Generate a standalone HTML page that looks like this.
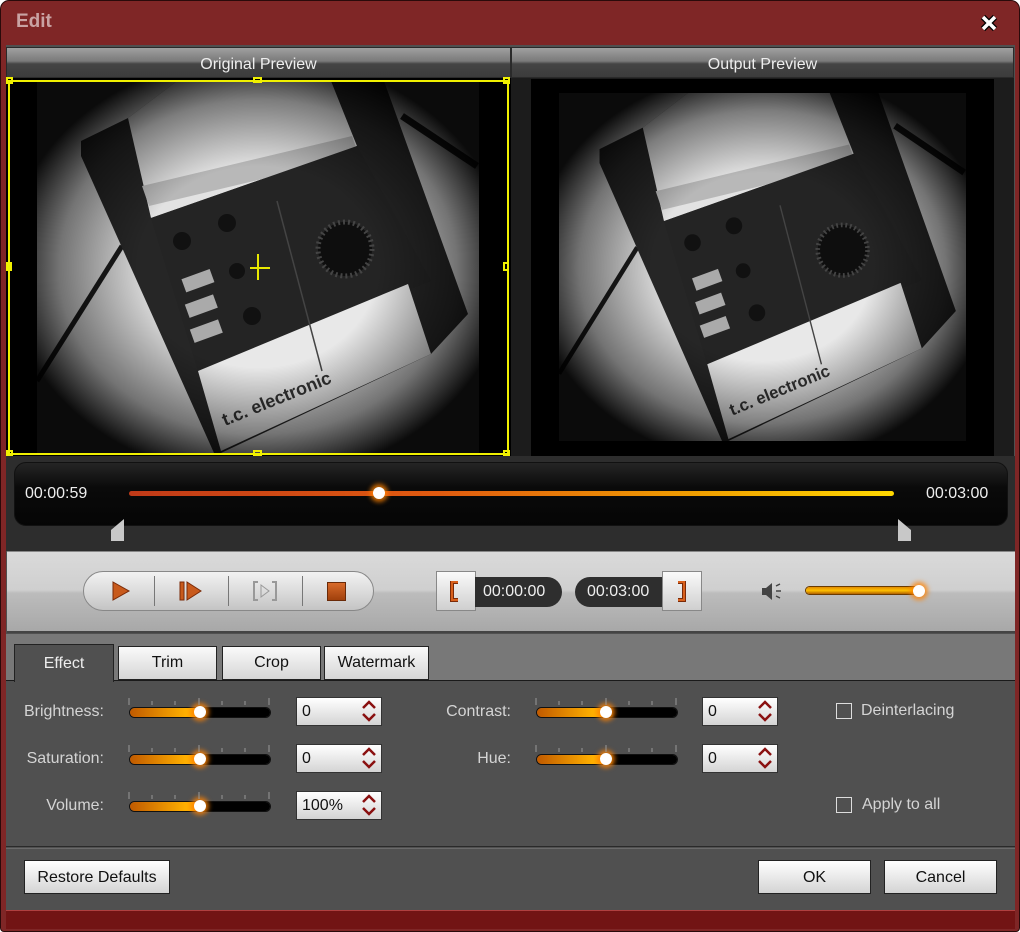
<!DOCTYPE html>
<html><head><meta charset="utf-8"><style>
*{margin:0;padding:0;box-sizing:border-box}
body{width:1020px;height:932px;overflow:hidden;background:#fff;font-family:"Liberation Sans",sans-serif;font-size:15px}
.win{position:absolute;left:0;top:0;width:1020px;height:932px;background:#7f2626;border:1px solid #2a0a0a;border-radius:9px 9px 4px 4px;overflow:hidden}
.a{position:absolute}
.title{left:15px;top:10px;color:#c9a3a3;font-weight:bold;font-size:19px}
.ph{top:46px;height:31px;background:linear-gradient(#a0a0a0,#7a7a7a 45%,#444 55%,#3c3c3c);color:#eee;text-align:center;line-height:33px;font-size:16px;border:1px solid #2a2a2a}
.time{color:#eee;font-size:15px}
.tab{top:645px;height:34px;background:linear-gradient(#fafafa,#d6d6d6);border:1px solid #222;color:#111;text-align:center;line-height:32px;font-size:16px}
.lbl{color:#d4d4d4;font-size:16px;text-align:right;width:110px}
.trk{height:9px;border-radius:5px;background:linear-gradient(90deg,#c05a00,#ffb000 40%,#ffa000 48%,#000 55%,#000);box-shadow:0 0 0 1px #111}
.knob{width:12px;height:12px;border-radius:50%;background:#fff;box-shadow:0 0 5px 3px rgba(255,130,0,.8)}
.spin{width:86px;height:29px;background:linear-gradient(#fff,#d4d4d4);border:1px solid #333;color:#111;padding:5px 0 0 5px;font-size:16px}
.btn{top:859px;height:34px;background:linear-gradient(#fff,#d4d4d4);border:1px solid #222;color:#111;text-align:center;line-height:33px;font-size:16px}
.cb{width:16px;height:16px;border:1px solid #ddd}
.cbl{color:#d4d4d4;font-size:16px}
</style></head><body>
<svg width="0" height="0" style="position:absolute"><defs>
<radialGradient id="vg" cx="50%" cy="50%" r="60%"><stop offset="0.45" stop-color="#000" stop-opacity="0"/><stop offset="0.75" stop-color="#000" stop-opacity="0.45"/><stop offset="0.95" stop-color="#000" stop-opacity="0.95"/></radialGradient>
<g id="photo">
<rect width="442" height="372" fill="#d2d2d2"/>
<path d="M0 300 L85 165" stroke="#1a1a1a" stroke-width="5"/>
<path d="M365 35 L440 85" stroke="#1a1a1a" stroke-width="7"/>
<polygon points="44,60 91,37 140,0 347,0 431,233 394,273 184,372 177,372 44,75" fill="#262626"/>
<polygon points="91,37 140,0 294,0 320,65 114,137" fill="#e2e2e2"/>
<polygon points="105,105 315,55 322,75 112,125" fill="#b8b8b8"/>
<polygon points="114,137 320,65 394,200 161,290" fill="#242424"/>
<polygon points="161,290 371,203 394,273 184,370" fill="#e8e8e8"/>
<circle cx="308" cy="168" r="27" fill="#0e0e0e" stroke="#444" stroke-dasharray="2 3" stroke-width="5"/>
<circle cx="145" cy="160" r="9" fill="#111"/><circle cx="190" cy="142" r="9" fill="#111"/><circle cx="215" cy="235" r="9" fill="#111"/><circle cx="200" cy="190" r="8" fill="#111"/>
<rect x="146" y="193" width="30" height="14" fill="#aaa" transform="rotate(-20 160 200)"/>
<rect x="150" y="218" width="30" height="14" fill="#aaa" transform="rotate(-20 165 227)"/>
<rect x="155" y="243" width="30" height="14" fill="#aaa" transform="rotate(-20 170 252)"/>
<path d="M240 120 L285 290" stroke="#444" stroke-width="1.5"/>
<text x="188" y="345" font-family="Liberation Sans" font-weight="bold" font-size="18" fill="#333" transform="rotate(-22 188 345)">t.c. electronic</text>
<rect width="442" height="372" fill="url(#vg)"/>
</g></defs></svg>
<div class="win">
<div class="a title">Edit</div>
<svg class="a" style="left:978px;top:12px" width="20" height="20"><path d="M4 4L16 16M16 4L4 16" stroke="#000" stroke-width="6"/><path d="M4 4L16 16M16 4L4 16" stroke="#fff" stroke-width="3.5"/></svg>
<div class="a" style="left:5px;top:44px;width:1009px;height:866px;background:#505050"></div>
<div class="a ph" style="left:5px;width:505px">Original Preview</div>
<div class="a ph" style="left:510px;width:503px">Output Preview</div>
<div class="a" style="left:5px;top:77px;width:505px;height:378px;background:#000"></div>
<svg class="a" style="left:36px;top:80px" width="442" height="372" viewBox="0 0 442 372" preserveAspectRatio="none"><use href="#photo"/></svg>
<div class="a" style="left:7px;top:79px;width:501px;height:375px;border:2px solid #f0f000"></div>
<div class="a" style="left:5px;top:76px;width:7px;height:7px;border:2px solid #f0f000"></div>
<div class="a" style="left:252px;top:76px;width:9px;height:6px;border:2px solid #f0f000"></div>
<div class="a" style="left:502px;top:76px;width:7px;height:7px;border:2px solid #f0f000"></div>
<div class="a" style="left:5px;top:261px;width:6px;height:9px;border:2px solid #f0f000"></div>
<div class="a" style="left:502px;top:261px;width:6px;height:9px;border:2px solid #f0f000"></div>
<div class="a" style="left:5px;top:449px;width:7px;height:7px;border:2px solid #f0f000"></div>
<div class="a" style="left:252px;top:449px;width:9px;height:6px;border:2px solid #f0f000"></div>
<div class="a" style="left:502px;top:449px;width:7px;height:7px;border:2px solid #f0f000"></div>
<div class="a" style="left:249px;top:266px;width:20px;height:2px;background:#e8e800"></div>
<div class="a" style="left:256px;top:253px;width:2px;height:26px;background:#e8e800"></div>
<div class="a" style="left:510px;top:77px;width:503px;height:378px;background:#1c1c1c"></div>
<div class="a" style="left:530px;top:78px;width:463px;height:377px;background:#000"></div>
<svg class="a" style="left:558px;top:92px" width="407" height="348" viewBox="0 0 442 372" preserveAspectRatio="none"><use href="#photo"/></svg>
<div class="a" style="left:5px;top:455px;width:1009px;height:95px;background:#2d2d2d"></div>
<div class="a" style="left:13px;top:461px;width:994px;height:64px;border-radius:12px;background:linear-gradient(#252525,#0a0a0a 40%,#050505);border:1px solid #111"></div>
<div class="a time" style="left:24px;top:484px;font-size:16px">00:00:59</div>
<div class="a time" style="left:925px;top:484px;font-size:16px">00:03:00</div>
<div class="a" style="left:128px;top:490px;width:765px;height:5px;border-radius:3px;background:linear-gradient(90deg,#c03a18,#e05a10 40%,#f0a000 75%,#ffd800)"></div>
<div class="a knob" style="left:372px;top:486px"></div>
<svg class="a" style="left:109px;top:517px" width="16" height="24"><path d="M1 23V12L14 1V23Z" fill="#c8c8c8"/></svg>
<svg class="a" style="left:896px;top:517px" width="16" height="24"><path d="M1 1L14 12V23H1Z" fill="#c8c8c8"/></svg>
<div class="a" style="left:6px;top:550px;width:1008px;height:82px;background:linear-gradient(#dadada,#cfcfcf 48%,#bcbcbc 52%,#a8a8a8);border-top:1px solid #888;border-bottom:2px solid #444"></div>
<div class="a" style="left:82px;top:570px;width:291px;height:40px;border-radius:20px;background:linear-gradient(#f2f2f2,#dcdcdc 50%,#c4c4c4);border:1px solid #888"></div>
<div class="a" style="left:153px;top:575px;width:1px;height:30px;background:#777"></div>
<div class="a" style="left:227px;top:575px;width:1px;height:30px;background:#777"></div>
<div class="a" style="left:301px;top:575px;width:1px;height:30px;background:#777"></div>
<svg class="a" style="left:110px;top:580px" width="20" height="22"><path d="M2 1L18 10L2 19Z" fill="#c85a1c" stroke="#7a2a08"/></svg>
<svg class="a" style="left:178px;top:580px" width="24" height="22"><rect x="1" y="1" width="4" height="18" fill="#c85a1c" stroke="#7a2a08"/><path d="M8 1L22 10L8 19Z" fill="#c85a1c" stroke="#7a2a08"/></svg>
<svg class="a" style="left:252px;top:580px" width="24" height="22"><path d="M5 1H1V19H5M19 1H23V19H19" fill="none" stroke="#999" stroke-width="2"/><path d="M8 4L16 10L8 16Z" fill="none" stroke="#999"/></svg>
<div class="a" style="left:326px;top:581px;width:19px;height:19px;background:linear-gradient(#d86a2a,#a0400c);border:1px solid #6a2a08"></div>
<div class="a" style="left:435px;top:570px;width:40px;height:40px;background:linear-gradient(#fafafa,#cfcfcf);border:1px solid #888"></div>
<svg class="a" style="left:448px;top:580px" width="14" height="22"><path d="M9 1H3V19H9" fill="none" stroke="#7a2a08" stroke-width="4"/><path d="M9 1H3V19H9" fill="none" stroke="#d8601c" stroke-width="2"/></svg>
<div class="a time" style="left:474px;top:576px;width:87px;height:30px;background:#2e2e2e;border-radius:0 15px 15px 0;line-height:30px;padding-left:8px;font-size:16px">00:00:00</div>
<div class="a time" style="left:574px;top:576px;width:90px;height:30px;background:#2e2e2e;border-radius:15px 0 0 15px;line-height:30px;padding-left:12px;font-size:16px">00:03:00</div>
<div class="a" style="left:661px;top:570px;width:40px;height:40px;background:linear-gradient(#fafafa,#cfcfcf);border:1px solid #888"></div>
<svg class="a" style="left:674px;top:580px" width="14" height="22"><path d="M3 1H9V19H3" fill="none" stroke="#7a2a08" stroke-width="4"/><path d="M3 1H9V19H3" fill="none" stroke="#d8601c" stroke-width="2"/></svg>
<svg class="a" style="left:760px;top:580px" width="28" height="22"><path d="M1 7H5L11 2V19L5 14H1Z" fill="#444"/><path d="M15 5L19 3M15 10H20M15 15L19 17" stroke="#444" stroke-width="1.5"/></svg>
<div class="a" style="left:805px;top:586px;width:113px;height:7px;border-radius:4px;background:linear-gradient(#e08a00,#ffc000 50%,#b06000);box-shadow:0 0 0 1px #6a3a00"></div>
<div class="a knob" style="left:912px;top:584px"></div>
<div class="a" style="left:5px;top:633px;width:1009px;height:47px;background:#787878"></div>
<div class="a" style="left:5px;top:679px;width:1009px;height:1px;background:#1a1a1a"></div>
<div class="a tab" style="left:13px;top:643px;width:100px;height:38px;background:#505050;color:#eee;border-bottom:none;line-height:38px">Effect</div>
<div class="a tab" style="left:117px;width:99px">Trim</div>
<div class="a tab" style="left:221px;width:99px">Crop</div>
<div class="a tab" style="left:323px;width:105px">Watermark</div>

<div class="a lbl" style="left:-7px;top:702px">Brightness:</div>
<div class="a lbl" style="left:-7px;top:749px">Saturation:</div>
<div class="a lbl" style="left:-7px;top:796px">Volume:</div>
<div class="a lbl" style="left:400px;top:702px">Contrast:</div>
<div class="a lbl" style="left:400px;top:749px">Hue:</div>

<div class="a trk" style="left:129px;top:707px;width:140px"></div><div class="a knob" style="left:193px;top:705px"></div>
<div class="a trk" style="left:129px;top:754px;width:140px"></div><div class="a knob" style="left:193px;top:752px"></div>
<div class="a trk" style="left:129px;top:801px;width:140px"></div><div class="a knob" style="left:193px;top:799px"></div>
<div class="a trk" style="left:536px;top:707px;width:140px"></div><div class="a knob" style="left:599px;top:705px"></div>
<div class="a trk" style="left:536px;top:754px;width:140px"></div><div class="a knob" style="left:599px;top:752px"></div>
<svg class="a" style="left:127px;top:696px" width="145" height="110">
<g stroke="#999"><g id="tk"><path d="M1 1V8M24 4V8M47 4V8M71 1V8M94 4V8M117 4V8M141 1V8"/></g><use href="#tk" y="47"/><use href="#tk" y="94"/></g></svg>
<svg class="a" style="left:534px;top:696px" width="145" height="60"><g stroke="#999"><use href="#tk"/><use href="#tk" y="47"/></g></svg>

<div class="a spin" style="left:295px;top:696px">0</div>
<div class="a spin" style="left:295px;top:743px">0</div>
<div class="a spin" style="left:295px;top:790px">100%</div>
<div class="a spin" style="left:701px;top:696px;width:76px">0</div>
<div class="a spin" style="left:701px;top:743px;width:76px">0</div>
<svg class="a" style="left:359px;top:698px" width="18" height="125"><g fill="none" stroke="#8a1010" stroke-width="2.5"><g id="ar"><path d="M3 9L9 3L15 9M3 15L9 21L15 15"/></g><use href="#ar" y="47"/><use href="#ar" y="94"/></g></svg>
<svg class="a" style="left:755px;top:698px" width="18" height="75"><g fill="none" stroke="#8a1010" stroke-width="2.5"><use href="#ar"/><use href="#ar" y="47"/></g></svg>

<div class="a cb" style="left:835px;top:702px"></div><div class="a cbl" style="left:860px;top:701px">Deinterlacing</div>
<div class="a cb" style="left:835px;top:796px"></div><div class="a cbl" style="left:861px;top:795px">Apply to all</div>

<div class="a" style="left:5px;top:845px;width:1009px;height:1px;background:#2a2a2a"></div>
<div class="a" style="left:5px;top:847px;width:1009px;height:1px;background:#6a6a6a"></div>
<div class="a btn" style="left:23px;width:146px">Restore Defaults</div>
<div class="a btn" style="left:757px;width:113px">OK</div>
<div class="a btn" style="left:883px;width:113px">Cancel</div>
<div class="a" style="left:5px;top:909px;width:1009px;height:19px;background:#721414;border-top:1px solid #b04040"></div>
</div>
</body></html>
